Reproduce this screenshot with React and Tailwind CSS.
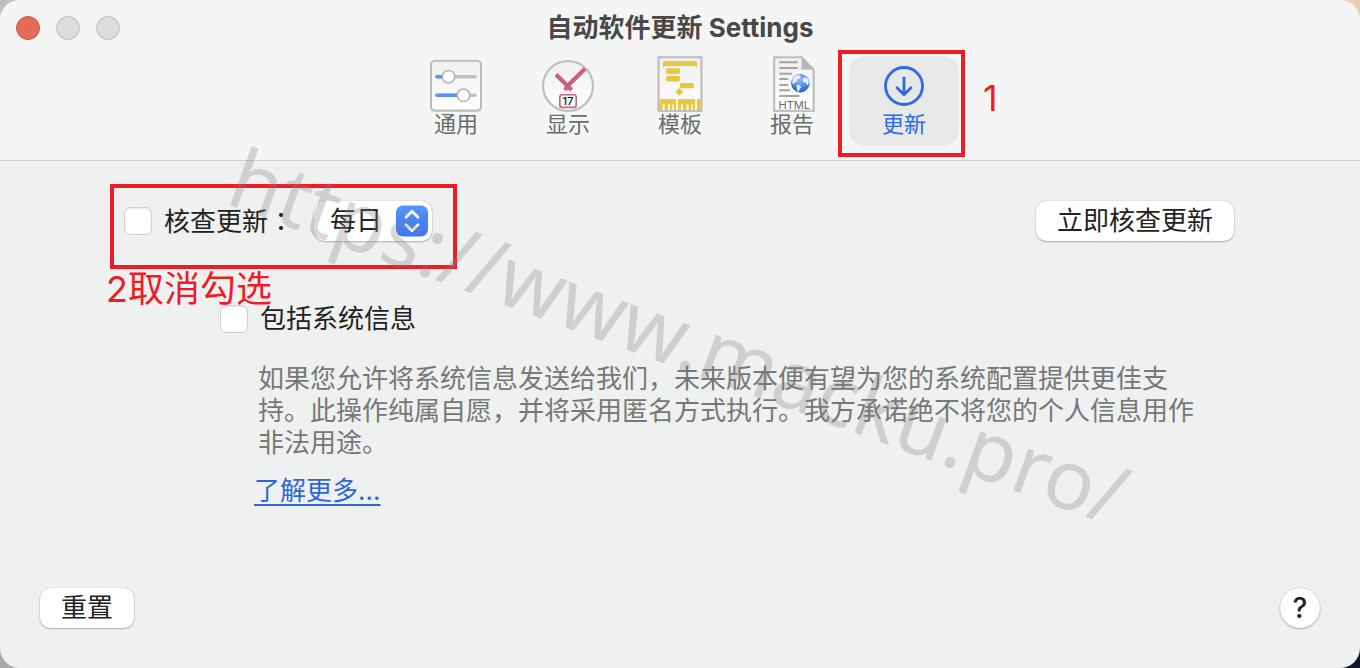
// src/App.jsx
import React, { useState } from 'react';

const GeneralIcon = () => (
  <svg viewBox="0 0 56 56" className="w-14 h-14" fill="none">
    <defs>
      <linearGradient id="panel" x1="0" y1="0" x2="0" y2="1">
        <stop offset="0" stopColor="#efefef" />
        <stop offset="1" stopColor="#ffffff" />
      </linearGradient>
    </defs>
    <rect x="2" y="5" width="52" height="51" rx="4.5" fill="#00000020" />
    <rect x="3" y="4.8" width="50" height="49.8" rx="4" fill="url(#panel)" stroke="#bcbebd" strokeWidth="2" />
    <path d="M9 20.7H47M9 39.3H47" stroke="#c1c1c1" strokeWidth="3.6" strokeLinecap="round" />
    <path d="M9 20.7H20M9 39.3H35" stroke="#5493f5" strokeWidth="3.6" strokeLinecap="round" />
    <circle cx="20.5" cy="20.7" r="6.3" fill="#fff" stroke="#b3b3b3" strokeWidth="1.5" />
    <circle cx="35.5" cy="39.3" r="6.3" fill="#fff" stroke="#b3b3b3" strokeWidth="1.5" />
  </svg>
);

const DisplayIcon = () => (
  <svg viewBox="0 0 56 56" className="w-14 h-14" fill="none">
    <circle cx="28" cy="30.6" r="25.8" fill="#00000020" />
    <circle cx="28" cy="29.8" r="24.9" fill="url(#panel)" stroke="#bcbebd" strokeWidth="2" />
    <path d="M45 12.8 30 27.5 24.8 34" stroke="#cc607b" strokeWidth="4.2" />
    <path d="M16 18.4 31.6 34" stroke="#cc607b" strokeWidth="4.2" />
    <rect x="19.8" y="38.8" width="16.4" height="12.6" rx="2.4" fill="#fff" stroke="#cc607b" strokeWidth="1.6" />
    <text x="28" y="49" textAnchor="middle" fontSize="11" fontWeight="500" fontFamily="Inter, sans-serif" fill="#111">17</text>
  </svg>
);

const TemplateIcon = () => (
  <svg viewBox="0 0 56 56" className="w-14 h-14" fill="none">
    <rect x="5.5" y="1" width="45" height="55" fill="#00000020" />
    <rect x="6.6" y="1.2" width="42.8" height="53.6" fill="url(#panel)" stroke="#bcbebd" strokeWidth="2" />
    <g fill="#e9c83f">
      <path d="M13.5 5h29A2.5 2.5 0 0 1 45 7.5V11h-1l-1.5-1h-29L12 11h-1V7.5A2.5 2.5 0 0 1 13.5 5z" />
      <rect x="14" y="12.3" width="14" height="5.7" rx="2" />
      <rect x="14" y="19.7" width="14" height="5.7" rx="2" />
      <rect x="28" y="27" width="14" height="5.3" rx="1.5" />
      <path d="M27.3 31.7l4 4-4 4-4-4z" />
      <rect x="7.3" y="43" width="41.4" height="11" />
    </g>
    <path d="M11.5 48.5v5.5M17 48.5v5.5M30 48.5v5.5M35.5 48.5v5.5" stroke="#fff" strokeWidth="2" />
    <path d="M25 43v11M44 43v11" stroke="#fff" strokeWidth="1.8" />
    <path d="M21 48.5v5.5M40 48.5v5.5" stroke="#fff" strokeWidth="1.4" />
  </svg>
);

const ReportIcon = () => (
  <svg viewBox="0 0 56 56" className="w-14 h-14" fill="none">
    <defs>
      <radialGradient id="globe" cx="0.5" cy="0.3" r="0.7">
        <stop offset="0" stopColor="#8cbcf7" />
        <stop offset="1" stopColor="#2363c4" />
      </radialGradient>
    </defs>
    <path d="M9 1.5H38l13 13V56H9z" fill="#00000020" />
    <path d="M10.2 1.2H37.5L49.6 13.5V54.8H10.2z" fill="url(#panel)" stroke="#bcbebd" strokeWidth="2" />
    <path d="M37.5 1 49.8 13.5H37.5z" fill="#b4b7b6" />
    <path
      d="M15.3 6.3H33.7M15.3 12H33.7M15.3 17.7H28M15.3 23H24.3M15.3 29H24.3M15.3 34.3H26M15.3 40H35.5"
      stroke="#a3a3a3"
      strokeWidth="1.9"
    />
    <circle cx="36.3" cy="27.2" r="9.2" fill="url(#globe)" />
    <path d="M28.6 23.2c1.3-2.3 3.3-3.6 5.8-4.1l2.4 1.2-.9 2.2-2.4.6-.6 2.6-2 .7-.9 2.2-1.7-1.2z" fill="#e4effd" />
    <path d="M32.4 28.5l3 .4 1.8 2-1.6 2.3-.7 2.6c-1.4-.7-2-2-1.9-3.6z" fill="#e4effd" />
    <path d="M40 21.2l2.8.5c1.4 1.6 2.1 3.4 2.1 5.3l-1.6 2.4-1.7-2.7-2.4-.8-.6-2.3z" fill="#e4effd" />
    <text x="30.3" y="53" textAnchor="middle" fontSize="11" fontFamily="Inter, sans-serif" fill="#6a6a6a">HTML</text>
  </svg>
);

const UpdateIcon = () => (
  <svg viewBox="0 0 56 56" className="w-14 h-14" fill="none" stroke="#2f68e8" strokeLinecap="round" strokeLinejoin="round">
    <circle cx="28" cy="30" r="18.5" strokeWidth="2.8" />
    <path d="M28 22v16.5M21 31.8l7 7 7-7" strokeWidth="2.8" />
  </svg>
);

const tabs = [
  { id: 'general', label: '通用', icon: GeneralIcon },
  { id: 'display', label: '显示', icon: DisplayIcon },
  { id: 'template', label: '模板', icon: TemplateIcon },
  { id: 'report', label: '报告', icon: ReportIcon },
  { id: 'update', label: '更新', icon: UpdateIcon },
];

// Toolbar tab, the update tab carries the first callout
const ToolbarTab = ({ tab, active, onSelect }) => {
  const Icon = tab.icon;
  return (
    <div className="relative">
      <button
        type="button"
        onClick={() => onSelect(tab.id)}
        className={`flex flex-col items-center w-[110px] h-[90px] rounded-2xl ${active ? 'bg-[#e7e9e8] text-[#2f68e8]' : 'text-[#6b6b6b]'}`}
      >
        <Icon />
        <span className="text-[22px] leading-6">{tab.label}</span>
      </button>
      {tab.id === 'update' && (
        <>
          <div className="absolute -top-1.5 -right-1.5 -bottom-[11px] -left-[11px] border-4 border-[#ee1c25] pointer-events-none" />
          <span className="absolute left-full top-5 ml-6 text-4xl leading-11 text-[#ee1c25]">1</span>
        </>
      )}
    </div>
  );
};

const Checkbox = ({ id }) => (
  <input
    id={id}
    type="checkbox"
    className="appearance-none w-7 h-7 shrink-0 rounded-md border border-[#cfcfcf] bg-white shadow-[inset_0_1px_2px_#00000018] checked:bg-[#3f7cf6]"
  />
);

const PushButton = ({ children }) => (
  <button
    type="button"
    className="h-10 px-[21px] rounded-[10px] bg-white text-[26px] leading-8 text-[#222] shadow-[0_0_1px_#00000050,0_1px_2px_#00000040]"
  >
    {children}
  </button>
);

const App = () => {
  const [activeTab, setActiveTab] = useState('update');

  return (
    <div className="min-h-screen flex bg-[conic-gradient(#e9ceb2_25%,#101827_25%_50%,#a9a9a9_50%_75%,#bfc1c0_75%)] font-['Inter','Noto_Sans_CJK_SC',sans-serif]">
      <div className="relative flex-1 flex flex-col rounded-[20px] overflow-hidden bg-[#eff1f0]">
        <header className="bg-[#f4f6f5] border-b border-[#cbcdcc] pb-3.5">
          <div className="grid grid-cols-[1fr_auto_1fr] items-center h-14 px-4">
            <div className="flex gap-4">
              <button type="button" aria-label="关闭" className="w-6 h-6 rounded-full bg-[#e66a5a] border border-[#cf5747]" />
              <button type="button" aria-label="最小化" className="w-6 h-6 rounded-full bg-[#dbdddc] border border-[#bbbdbc]" />
              <button type="button" aria-label="缩放" className="w-6 h-6 rounded-full bg-[#dbdddc] border border-[#bbbdbc]" />
            </div>
            <h1 className="text-[26px] leading-8 font-bold text-[#484848]">自动软件更新 Settings</h1>
          </div>
          <nav className="flex justify-center gap-0.5">
            {tabs.map((tab) => (
              <ToolbarTab key={tab.id} tab={tab} active={tab.id === activeTab} onSelect={setActiveTab} />
            ))}
          </nav>
        </header>

        <main className="flex-1 flex flex-col pt-10 text-[26px] leading-8 text-[#222]">
          <div className="flex items-center justify-between pl-[124px] pr-[126px]">
            <div className="relative flex items-center">
              <Checkbox id="check-update" />
              <label htmlFor="check-update" className="ml-3">
                核查更新<span className="font-['Noto_Sans_CJK_TC',sans-serif]">：</span>
              </label>
              <div className="relative ml-5">
                <select
                  aria-label="核查频率"
                  className="appearance-none w-[118px] h-10 pl-4 rounded-[10px] bg-white text-[26px] leading-8 shadow-[0_0_1px_#00000050,0_1px_2px_#00000040]"
                >
                  <option>每日</option>
                  <option>每周</option>
                  <option>每月</option>
                </select>
                <svg viewBox="0 0 32 32" className="absolute top-1 right-1 w-8 h-8 pointer-events-none" fill="none">
                  <defs>
                    <linearGradient id="stepper" x1="0" y1="0" x2="0" y2="1">
                      <stop offset="0" stopColor="#5395fa" />
                      <stop offset="1" stopColor="#3a76f6" />
                    </linearGradient>
                  </defs>
                  <rect y="0.5" width="32" height="31" rx="7" fill="url(#stepper)" />
                  <path d="M10 12.3l6-6 6 6M10 19.7l6 6 6-6" stroke="#fff" strokeWidth="2.8" strokeLinecap="round" strokeLinejoin="round" />
                </svg>
              </div>

              {/* Second callout */}
              <div className="absolute -top-[17px] -right-[25px] -bottom-7 -left-3.5 border-4 border-[#ee1c25] pointer-events-none" />
              <span className="absolute top-full -left-[18px] mt-[26px] text-4xl leading-11 text-[#ee1c25] whitespace-nowrap pointer-events-none">
                2取消勾选
              </span>
            </div>
            <PushButton>立即核查更新</PushButton>
          </div>

          <section className="mt-[62px] pl-[220px] pr-36">
            <div className="flex items-center">
              <Checkbox id="system-info" />
              <label htmlFor="system-info" className="ml-3">包括系统信息</label>
            </div>
            <p className="mt-7 ml-[38px] text-[#767776]">
              如果您允许将系统信息发送给我们，未来版本便有望为您的系统配置提供更佳支持。此操作纯属自愿，并将采用匿名方式执行。我方承诺绝不将您的个人信息用作非法用途。
            </p>
            <a href="#more" className="inline-block mt-4 ml-[34px] text-[#2f66d8] underline underline-offset-4">了解更多...</a>
          </section>

          <footer className="mt-auto flex items-center justify-between px-10 pb-10">
            <PushButton>重置</PushButton>
            <button
              type="button"
              aria-label="帮助"
              className="w-10 h-10 rounded-full bg-white text-[28px] leading-8 font-medium text-[#222] shadow-[0_0_1px_#00000050,0_1px_2px_#00000040]"
            >
              ?
            </button>
          </footer>
        </main>

        {/* Watermark */}
        <div className="absolute inset-0 flex items-center justify-center pointer-events-none">
          <span className="rotate-20 whitespace-nowrap text-[83px] leading-none text-[#808080]/30 font-['Noto_Sans',sans-serif]">
            https://www.macku.pro/
          </span>
        </div>
      </div>
    </div>
  );
};

export default App;
